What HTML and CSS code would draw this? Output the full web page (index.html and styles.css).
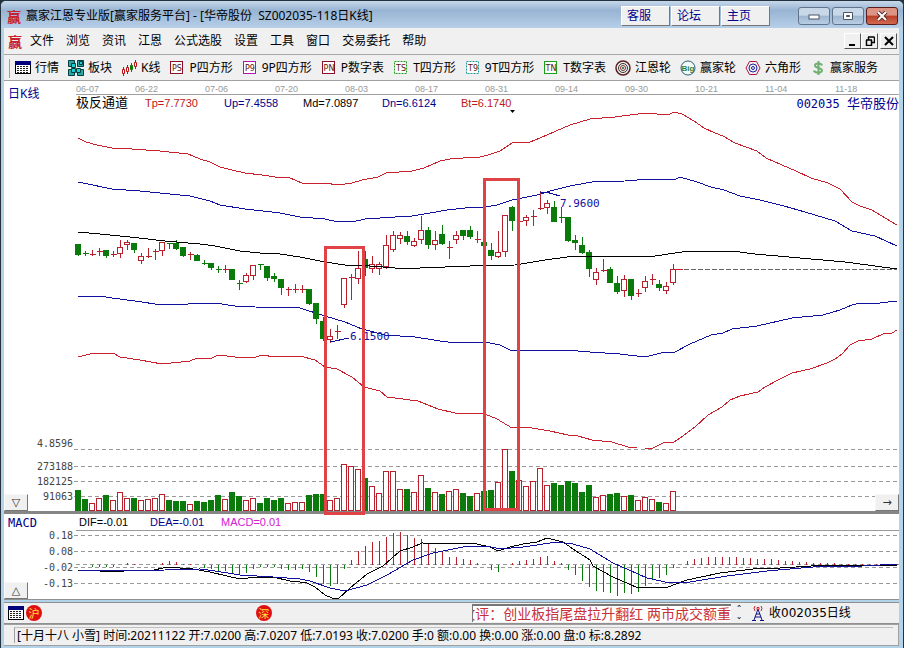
FILE: index.html
```html
<!DOCTYPE html>
<html lang="zh-CN">
<head>
  <meta charset="UTF-8">
  <meta name="viewport" content="width=device-width, initial-scale=1">
  <title>赢家江恩专业版</title>
  <link rel="stylesheet" href="styles.css">
</head>
<body>
  <div class="window">

    <!-- Title bar -->
    <header class="titlebar">
      <span class="logo">赢</span>
      <h1>赢家江恩专业版[赢家服务平台] - [华帝股份&nbsp; SZ002035-118日K线]</h1>
      <div class="site-links">
        <a href="#service">客服</a>
        <a href="#forum">论坛</a>
        <a href="#home">主页</a>
      </div>
      <div class="win-buttons">
        <button aria-label="最小化"><svg width="12" height="8"><rect x="1" y="3" width="10" height="4" fill="#fff" stroke="#4b5566"/></svg></button>
        <button aria-label="最大化"><svg width="12" height="10"><path d="M1.500 1.500h9v7h-9zM4.500 4.500h3v1h-3z" fill="#fff" fill-rule="evenodd" stroke="#4b5566"/></svg></button>
        <button class="close" aria-label="关闭"><svg width="12" height="10"><path d="M2 1l8 8M10 1l-8 8" stroke="#5b2a2a" stroke-width="4"/><path d="M2 1l8 8M10 1l-8 8" stroke="#fff" stroke-width="2"/></svg></button>
      </div>
    </header>

    <!-- Menu -->
    <nav class="menubar">
      <span class="logo">赢</span>
      <button>文件</button>
      <button>浏览</button>
      <button>资讯</button>
      <button>江恩</button>
      <button>公式选股</button>
      <button>设置</button>
      <button>工具</button>
      <button>窗口</button>
      <button>交易委托</button>
      <button>帮助</button>
      <div class="mdi-buttons">
        <button aria-label="最小化"><svg width="10" height="10"><path d="M1 9h6" stroke="#000" stroke-width="2"/></svg></button>
        <button aria-label="还原"><svg width="10" height="10"><path d="M3 1h6.500M3.500 1v3M9.500 1v5.500H7M1 4h6M1.500 4v5.500h5V4" fill="none" stroke="#000" stroke-width="1.500"/></svg></button>
        <button class="mdi-close" aria-label="关闭"><svg width="10" height="10"><path d="M1 1l8 8M9 1l-8 8" stroke="#000" stroke-width="2"/></svg></button>
      </div>
    </nav>

    <!-- Toolbar -->
    <div class="toolbar">
      <button>
        <svg width="16" height="16"><rect x=".5" y="1.500" width="15" height="12" fill="#fff" stroke="#000"/><rect y="1" width="16" height="4" fill="#00007b"/><path d="M2 6.500h12M2 8.500h12M2 10.500h12M2 12.500h12" stroke="#222" stroke-dasharray="2 1"/></svg>
        行情</button>
      <button>
        <svg width="16" height="16"><g fill="#2aa7a7" stroke="#063c3c"><path d="M.5.5h6v6h-6zM9.500.5h6v6h-6zM.5 9.500h6v6h-6zM9.500 9.500h6v6h-6z"/></g><path d="M3.500 3.500h4v4h-4zM11.500 1.500h3v3h-3zM3.500 8.500h4v4h-4zM8.500 8.500h4v4h-4z" fill="#1fd0d0" stroke="#063c3c"/></svg>
        板块</button>
      <button>
        <svg width="16" height="16"><g fill="#fff" stroke="#c01010"><path d="M2.500 7v9M6.500 5v9M14.500 0v9"/><path d="M1.500 9.500h2v4h-2zM5.500 7.500h2v4h-2zM13.500 2.500h2v4h-2z"/></g><path d="M10.500 3v9M9.500 5.500h2v4h-2z" fill="#0a7a0a" stroke="#0a7a0a"/></svg>
        K线</button>
      <button>
        <svg class="tag" width="16" height="16"><rect x="1.500" y="1.500" width="12" height="12" fill="#fff" stroke="#8a0f2a"/><text x="8" y="11">PS</text></svg>
        P四方形</button>
      <button>
        <svg class="tag" width="16" height="16"><rect x="1.500" y="1.500" width="12" height="12" fill="#fff" stroke="#b414b4"/><text x="8" y="11">P9</text></svg>
        9P四方形</button>
      <button>
        <svg class="tag" width="16" height="16"><rect x="1.500" y="1.500" width="12" height="12" fill="#fff" stroke="#8a0f2a"/><text x="8" y="11">PN</text></svg>
        P数字表</button>
      <button>
        <svg class="tag" width="16" height="16"><rect x="1.500" y="1.500" width="12" height="12" fill="#fff" stroke="#1aa01a" stroke-dasharray="2 1"/><text x="8" y="11">TS</text></svg>
        T四方形</button>
      <button>
        <svg class="tag" width="16" height="16"><rect x="1.500" y="1.500" width="12" height="12" fill="#fff" stroke="#1f9a9a" stroke-dasharray="2 1"/><text x="8" y="11">T9</text></svg>
        9T四方形</button>
      <button>
        <svg class="tag" width="16" height="16"><rect x="1.500" y="1.500" width="12" height="12" fill="#fff" stroke="#1aa01a"/><text x="8" y="11">TN</text></svg>
        T数字表</button>
      <button>
        <svg width="16" height="16" fill="none"><circle cx="8" cy="8" r="7" stroke="#5a1f1f" stroke-width="1.500"/><circle cx="8" cy="8" r="4.500" stroke="#333"/><circle cx="8" cy="8" r="2.500" stroke="#7b3030"/><circle cx="8" cy="8" r="1" fill="#186018"/></svg>
        江恩轮</button>
      <button>
        <svg class="big" width="16" height="16"><circle cx="8" cy="8" r="7" fill="#f4fbf8" stroke="#28607c"/><text x="8" y="11" text-anchor="middle">Big</text></svg>
        赢家轮</button>
      <button>
        <svg width="16" height="16" fill="none"><path d="M1 8l3.500-6.500h7L15 8l-3.500 6.500h-7z" stroke="#b01840"/><circle cx="8" cy="8" r="4" stroke="#2020a0"/><circle cx="8" cy="8" r="1.500" stroke="#2020a0"/></svg>
        六角形</button>
      <button>
        <svg width="16" height="16" fill="none"><path d="M12 5.500C11.500 3 5 2.500 5 5.500S12 7.500 12 10.500 4.500 13 4 10.500M8.500 1v14" stroke="#6fae6f" stroke-width="2"/></svg>
        赢家服务</button>
    </div>

    <!-- Daily candles with the channel bands -->
    <section class="panel price">
      <div class="price-head">
        <h2>日K线</h2>
        <div class="price-info">
          <ol class="dates">
            <li>06-07</li><li>06-22</li><li>07-06</li><li>07-20</li><li>08-03</li><li>08-17</li>
            <li>08-31</li><li>09-14</li><li>09-30</li><li>10-21</li><li>11-04</li><li>11-18</li>
          </ol>
          <div class="legend">
            <b>极反通道</b>
            <span class="red">Tp=7.7730</span>
            <span class="blue">Up=7.4558</span>
            <span>Md=7.0897</span>
            <span class="blue">Dn=6.6124</span>
            <span class="red">Bt=6.1740</span>
            <strong>002035 <i>华帝股份</i></strong>
          </div>
        </div>
      </div>
      <svg id="priceChart" class="chart" viewBox="4 110 895 401"></svg>
      <button class="corner left" aria-label="向下">▽</button>
      <button class="corner right" aria-label="向右">→</button>
    </section>

    <section class="panel macd">
      <div class="macd-head">
        <h2>MACD</h2>
        <span>DIF=-0.01</span>
        <span class="blue">DEA=-0.01</span>
        <span class="pink">MACD=0.01</span>
      </div>
      <svg id="macdChart" class="chart" viewBox="4 530 895 69"></svg>
      <button class="corner left" aria-label="向上">△</button>
    </section>

    <!-- News line -->
    <div class="newsbar">
      <svg width="16" height="14"><rect x=".5" y=".5" width="15" height="13" fill="#fff" stroke="#000"/><rect width="16" height="4" fill="#00007b"/><path d="M2 5.500h12M2 7.500h12M2 9.500h12M2 11.500h12" stroke="#222" stroke-dasharray="2 1"/></svg>
      <span class="market">沪</span>
      <span class="market second">深</span>
      <div class="news"><span>收评：创业板指尾盘拉升翻红 两市成交额重</span></div>
      <div class="spin"><button aria-label="上一条">⌃</button><button aria-label="下一条">⌄</button></div>
      <svg class="tower" width="12" height="16" fill="none"><path d="M6 4L2 15M6 4l4 11M4 9h4M3 12h6M0 15.500h4M8 15.500h4" stroke="#101080"/><path d="M3 1q-2 2 0 5M9 1q2 2 0 5M5 2.500h2v2H5z" stroke="#c02030"/></svg>
      <span class="feed">收002035日线</span>
    </div>

    <footer class="statusbar">
      <p>[十月十八 小雪] 时间:20211122 开:7.0200 高:7.0207 低:7.0193 收:7.0200 手:0 额:0.00 换:0.00 涨:0.00 盘:0 标:8.2892</p>
    </footer>
  </div>

  <script src="chart.js"></script>
</body>
</html>
```
FILE: styles.css
```css
* {
  box-sizing: border-box;
}

body {
  margin: 0;
  min-height: 100vh;
  background: #20303c;
  font-family: "Noto Sans", "Noto Sans CJK SC", sans-serif;
  font-size: 12px;
  line-height: 16px;
  color: #000;
}

button {
  margin: 0;
  padding: 0;
  border: 0;
  background: none;
  font: inherit;
  color: inherit;
}

h1, h2, p, ol {
  margin: 0;
  padding: 0;
  font-size: 12px;
  font-weight: normal;
}

svg {
  display: block;
  flex: none;
}

.window {
  display: flex;
  flex-direction: column;
  min-height: 100vh;
  padding: 0 4px 6px 3px;
  border: 1px solid #25313d;
  border-radius: 6px 6px 0 0;
  background: #b3d3ea;
}

.logo {
  width: 18px;
  font-family: "Noto Sans CJK SC", sans-serif;
  font-size: 14px;
  font-weight: bold;
  color: #c8202c;
}

/* title bar */
.titlebar {
  display: flex;
  align-items: center;
  height: 27px;
  margin: 0 -4px 0 -3px;
  padding: 3px 5px 0 6px;
  border-radius: 5px 5px 0 0;
  background: linear-gradient(#c6d8ea, #98b4d3 35%, #b7cfe8);
}

.titlebar h1 {
  flex: 1;
  padding-left: 1px;
  white-space: nowrap;
}

.site-links {
  display: flex;
  gap: 1px;
  margin-right: 28px;
}

.site-links a {
  width: 49px;
  height: 20px;
  padding: 1px 5px;
  border: 1px solid;
  border-color: #fff #777 #777 #fff;
  background: #f0f0f0;
  color: #00008b;
  text-decoration: none;
}

.win-buttons {
  display: flex;
  gap: 2px;
}

.win-buttons button {
  display: grid;
  place-items: center;
  width: 32px;
  height: 18px;
  border: 1px solid #61748c;
  border-radius: 3px;
  background: linear-gradient(#c9d8e8 45%, #9fb6d0 50%, #b9cee4);
}

.win-buttons .close {
  border-color: #5b1c1c;
  background: linear-gradient(#dc9485 45%, #bb3d28 50%, #cf6a50);
}

/* menu */
.menubar {
  display: flex;
  align-items: center;
  gap: 12px;
  height: 26px;
  padding: 0 2px 0 4px;
  background: #f0f0f0;
}

.menubar .logo {
  margin-right: -8px;
}

.mdi-buttons {
  display: flex;
  margin-left: auto;
}

.mdi-buttons button {
  display: grid;
  place-items: center;
  width: 17px;
  height: 16px;
  border: 1px solid;
  border-color: #fff #555 #555 #fff;
}

.mdi-buttons .mdi-close {
  margin-left: 2px;
}

/* toolbar */
.toolbar {
  display: flex;
  align-items: center;
  gap: 9px;
  height: 27px;
  padding-left: 11px;
  border-top: 1px solid #a8a8a8;
  border-bottom: 1px solid #a0a0a0;
  background: linear-gradient(#a0a0a0, #a0a0a0) 5px 4px / 1px 19px no-repeat, #f0f0f0;
}

.toolbar button {
  display: flex;
  align-items: center;
  gap: 4px;
  white-space: nowrap;
}

.tag text {
  font: 8px "DejaVu Sans", sans-serif;
  fill: #5c1010;
  text-anchor: middle;
}

.big text {
  font: bold 8px "Liberation Sans", sans-serif;
  fill: #1f8050;
}

/* chart panels */
.panel {
  position: relative;
  background: #fff;
}

.panel h2 {
  padding-left: 4px;
  color: #00008b;
}

.price {
  border-bottom: 3px solid #868686;
}

.price-head {
  display: grid;
  grid-template-columns: 72px minmax(0, 1fr);
  height: 29px;
}

.price-head h2 {
  padding-top: 5px;
}

.dates {
  display: flex;
  height: 14px;
  border-bottom: 1px solid #a0a0a0;
  font: 9px/16px "Liberation Sans", sans-serif;
  color: #999;
  list-style: none;
}

.dates li {
  flex: none;
  width: 70px;
}

.dates li:first-child {
  width: 59px;
}

.dates li:last-child {
  width: auto;
}

.legend {
  display: flex;
  font: 11px/16px "Liberation Sans", "Noto Sans CJK SC", sans-serif;
}

.legend span {
  width: 79px;
}

.legend b {
  width: 69px;
  font-size: 13px;
  font-weight: normal;
}

.legend strong {
  margin-left: auto;
  font: 12px/16px "DejaVu Sans Mono", monospace;
  color: #00008b;
}

.legend i {
  font: 13px/16px "Noto Sans CJK SC", sans-serif;
}

.red { color: #c01818; }
.blue { color: #00008b; }
.pink { color: #d020d0; }

.chart {
  width: 100%;
  height: auto;
  overflow: visible;
}

.price .chart {
  position: relative;
  z-index: 1;
}

.corner {
  position: absolute;
  z-index: 2;
  bottom: 0;
  width: 24px;
  height: 17px;
  border: 1px solid;
  border-color: #f8f8f8 #777 #777 #f8f8f8;
  background: #f0f0f0;
  font: 11px/14px "DejaVu Sans", sans-serif;
  color: #333;
}

.corner.left { left: 0; }
.corner.right { right: 0; }

.macd {
  border-bottom: 1px solid #909090;
}

.macd-head {
  display: flex;
  height: 16px;
  font: 11px/16px "Liberation Sans", sans-serif;
}

.macd-head h2 {
  width: 75px;
  font: 12px/18px "DejaVu Sans Mono", monospace;
}

.macd-head span {
  width: 71px;
}

/* chart drawing */
.grid { stroke: #999; stroke-dasharray: 4 3; }
.frame { stroke: #999; }
.axis { font: 10px "DejaVu Sans Mono", monospace; fill: #444; text-anchor: end; }
.line { fill: none; shape-rendering: crispEdges; }
.line.r { stroke: #c8202c; }
.line.b { stroke: #10109c; }
.line.k { stroke: #000; }
.line.last { stroke: #666; stroke-dasharray: 5 2; }
.up { fill: #fff; stroke: #b8202c; }
.down { fill: #0a7a0a; stroke: #0a7a0a; }
.crisp { shape-rendering: crispEdges; }
.mark { fill: none; stroke: #e04345; stroke-width: 3; }
.value { font: 11px "DejaVu Sans Mono", monospace; fill: #1010a0; }

/* bottom bars */
.newsbar {
  display: flex;
  align-items: center;
  height: 22px;
  margin-top: 2px;
  padding-left: 4px;
  border-top: 1px solid #909090;
  border-bottom: 1px solid #909090;
  background: #f0f0f0;
}

.market {
  width: 16px;
  height: 16px;
  margin-left: 2px;
  border-radius: 8px;
  background: #e01010;
  font: 11px/16px "Noto Sans CJK SC", sans-serif;
  text-align: center;
  color: #ffe040;
}

.market.second {
  margin-left: 24%;
}

.news {
  display: flex;
  flex: 1;
  justify-content: flex-end;
  max-width: 259px;
  height: 18px;
  margin-left: auto;
  overflow: hidden;
  border-top: 2px solid #777;
  border-left: 1px solid #777;
  background: #fff;
  font-size: 14px;
  line-height: 16px;
  white-space: nowrap;
  color: #c8303a;
}

.spin {
  display: flex;
  flex-direction: column;
  width: 16px;
  font: 8px/8px "DejaVu Sans", sans-serif;
}

.spin button {
  height: 8px;
}

.tower {
  margin: 0 5px;
}

.feed {
  width: 130px;
  font-family: "DejaVu Sans", "Noto Sans CJK SC", sans-serif;
}

.statusbar {
  flex: 1;
  padding: 2px 5px 2px 4px;
  border: 1px solid #a0a0a0;
  border-left: 0;
  background: #f0f0f0;
}

.statusbar p {
  height: 16px;
  padding-left: 2px;
  border-left: 1px solid #a0a0a0;
  border-top: 1px solid #c0c0c0;
  margin-left: 6px;
  line-height: 15px;
  white-space: nowrap;
  overflow: hidden;
}
```
FILE: chart.js
```js
const NS = 'http://www.w3.org/2000/svg';
const STEP = 7;
const FIRST = 78;

function add(svg, tag, attrs, text) {
  const el = document.createElementNS(NS, tag);
  for (const key in attrs) el.setAttribute(key, attrs[key]);
  if (text) el.textContent = text;
  svg.appendChild(el);
  return el;
}

function line(svg, cls, points) {
  add(svg, 'polyline', { class: 'line ' + cls, points: points });
}

function gridLine(svg, y, label, labelY) {
  add(svg, 'path', { class: 'grid crisp', d: `M74 ${y + 0.5}H899` });
  add(svg, 'text', { class: 'axis', x: 73, y: labelY }, label);
}

// [direction, high, body top, body bottom, low, volume top]
const candles = [
  ['g',244,244,254,255,490], ['g',251,253,253,255,499], ['r',250,254,254,255,503], ['r',248,251,251,255,498],
  ['g',250,250,255,257,495], ['r',251,254,254,256,500], ['r',240,247,253,257,492], ['r',240,242,244,249,498],
  ['g',243,243,249,252,498], ['r',253,256,260,263,500], ['r',248,256,256,257,499], ['r',249,251,251,259,498],
  ['r',242,242,250,255,494], ['g',243,243,243,248,500], ['g',240,243,248,249,501], ['g',247,247,255,256,501],
  ['r',252,254,254,259,504], ['g',254,255,260,260,501], ['g',260,263,263,264,502], ['g',263,263,267,269,500],
  ['g',266,269,269,272,495], ['r',265,269,269,272,499], ['g',269,269,279,279,492], ['g',280,283,283,289,496],
  ['r',273,275,281,282,500], ['r',265,265,275,279,498], ['g',264,264,264,269,503], ['g',266,266,277,280,498],
  ['g',273,276,278,281,500], ['g',279,279,287,294,498], ['r',287,289,289,295,503], ['r',284,289,289,292,502],
  ['r',285,289,289,292,502], ['g',289,289,303,304,495], ['g',303,303,318,323,494], ['g',317,321,338,340,494],
  ['r',329,336,339,342,500], ['r',325,331,331,338,498], ['r',278,278,304,307,464], ['r',274,277,277,299,466],
  ['r',251,268,278,283,469], ['g',251,259,267,275,478], ['r',256,264,268,272,486], ['r',262,264,268,274,493],
  ['r',235,245,266,268,471], ['r',231,235,249,251,471], ['r',232,235,238,243,489], ['g',231,236,241,244,489],
  ['r',238,241,245,246,492], ['r',216,230,239,243,475], ['g',227,230,244,248,488], ['r',231,240,244,249,492],
  ['g',225,234,243,244,494], ['r',241,247,247,258,491], ['r',231,235,239,243,489], ['g',230,230,235,239,493],
  ['g',226,230,236,238,496], ['r',231,239,239,242,493], ['g',242,242,245,246,491], ['g',243,250,255,259,490],
  ['r',231,252,256,257,482], ['r',215,215,251,256,449], ['g',206,207,220,230,471], ['r',219,221,221,224,480],
  ['r',215,217,220,225,486], ['r',210,216,216,225,481], ['r',191,208,208,209,468], ['r',200,203,207,213,485],
  ['g',201,207,221,221,483], ['g',207,217,217,222,485], ['g',217,217,240,241,481], ['g',235,240,242,249,483],
  ['g',237,245,252,253,492], ['g',250,252,268,276,485], ['r',268,272,279,284,497], ['r',259,270,270,271,495],
  ['g',267,269,282,282,494], ['g',276,283,291,293,493], ['r',275,279,290,296,496], ['g',279,279,295,299,495],
  ['r',289,293,293,296,500], ['r',276,281,287,291,497], ['r',274,279,279,284,499], ['g',280,284,287,290,502],
  ['r',282,286,290,293,503], ['r',264,269,282,284,491]
];

// bar heights above (+) or below (-) the zero line
const histogram = [
  0,0,-2,-2,-2,-2,0,2,1,0,0,0,2,4,3,1,1,0,-3,-4,-6,-6,-8,-10,-8,-4,-2,-2,-2,-4,-5,-5,
  -4,-7,-12,-19,-21,-19,-4,5,14,19,23,24,28,32,33,30,27,26,21,17,14,8,8,6,5,2,0,-5,-7,0,
  2,4,5,6,8,9,4,2,-5,-10,-16,-22,-26,-27,-28,-31,-28,-29,-27,-21,-15,-13,-10,-3,0,4,6,7,
  8,8,8,8,8,7,7,6,6,6,5,4,4,3,3,2,2,2,2,1,1,1,1,1,1,1,1,1
];

function drawPrice() {
  const svg = document.getElementById('priceChart');
  gridLine(svg, 449, '4.8596', 447);
  gridLine(svg, 466, '273188', 470);
  gridLine(svg, 481, '182125', 485);
  gridLine(svg, 496, '91063', 500);

  line(svg, 'r', '78,138 86,142 97,145 112,148 132,149 160,151 188,154 200,159 210,162 220,167 232,170 245,173 262,175 275,177 290,178 302,183 325,183 338,185 352,183 362,180 378,177 386,173 412,171 424,168 440,161 455,158 463,158 480,157 488,155 500,151 512,143 530,142 540,138 556,131 570,125 590,119 615,117 630,115 646,113 668,115 674,112 682,114 694,121 704,128 715,133 723,136 735,143 757,151 766,158 782,165 796,171 811,178 828,183 840,189 852,202 860,206 872,210 885,218 897,225');
  line(svg, 'b', '78,182 112,189 140,191 190,196 210,201 220,205 245,209 263,211 280,213 300,217 325,219 338,222 345,221 352,222 365,219 395,217 412,216 430,213 447,210 465,208 485,207 497,205 512,200 537,195 550,191 570,186 592,182 625,181 650,179 676,179 680,177 697,182 711,187 724,190 740,196 760,200 784,206 805,212 835,221 852,231 875,236 897,246');
  line(svg, 'b', '78,296 100,296 112,298 135,301 162,305 188,304 215,303 235,306 255,307 300,308 325,316 345,322 362,329 385,335 415,337 440,341 455,343 465,342 490,343 500,345 510,350 565,350 590,352 620,354 645,357 665,352 675,352 690,344 711,335 723,333 732,329 757,326 792,318 823,315 840,310 852,305 860,303 880,303 897,301');
  line(svg, 'r', '78,357 90,354 113,353 120,357 140,360 162,364 190,361 197,358 212,358 218,355 235,357 245,357 253,358 262,355 275,357 300,356 315,360 325,367 337,369 352,377 364,387 380,391 387,397 418,401 438,409 455,413 485,414 497,419 512,428 526,427 550,431 568,435 578,436 592,440 612,442 628,447 637,447');
  line(svg, 'r', '645,449 653,448 665,442 674,442 680,438 695,427 708,415 722,407 730,400 740,396 758,392 765,387 780,379 792,373 810,369 827,363 835,359 842,354 850,345 858,341 872,339 883,334 892,333 897,330');

  candles.forEach(([dir, high, top, bottom, low, vol], i) => {
    const x = FIRST + i * STEP + 0.5;
    const cls = (dir === 'r' ? 'up' : 'down') + ' crisp';
    add(svg, 'path', { class: cls, d: `M${x} ${high}V${low + 1}` });
    if (top === bottom) {
      add(svg, 'path', { class: cls, d: `M${x - 3} ${top + 0.5}h6` });
    } else {
      add(svg, 'rect', { class: cls, x: x - 3, y: top + 0.5, width: 5, height: bottom - top });
    }
    add(svg, 'rect', { class: cls, x: x - 3, y: vol + 0.5, width: 5, height: 510 - vol });
  });

  line(svg, 'k', '78,232 100,234 130,237 165,241 200,244 215,246 240,251 260,253 280,254 300,257 325,262 345,265 370,266 395,268 420,268 470,266 515,265 545,260 575,256 655,256 682,252 700,251 732,251 755,254 800,258 845,262 875,266 897,269');

  // last price carried to the right edge
  add(svg, 'path', { class: 'line r', d: 'M675 269.5h8' });
  add(svg, 'path', { class: 'line last', d: 'M684 269.5H897' });

  line(svg, 'b', '330,342 349,338');
  add(svg, 'text', { class: 'value', x: 350, y: 340 }, '6.1500');
  line(svg, 'b', '540,192 546,192 560,196');
  add(svg, 'text', { class: 'value', x: 560, y: 207 }, '7.9600');
  add(svg, 'path', { d: 'M510 110h5l-2.500 3z' });

  add(svg, 'rect', { class: 'mark', x: 325.5, y: 247.5, width: 38, height: 266 });
  add(svg, 'rect', { class: 'mark', x: 484.5, y: 179.5, width: 34, height: 330 });
}

function drawMacd() {
  const svg = document.getElementById('macdChart');
  add(svg, 'path', { class: 'frame crisp', d: 'M76 530.5H899' });
  gridLine(svg, 535, '0.18', 539);
  gridLine(svg, 551, '0.08', 555);
  gridLine(svg, 567, '-0.02', 571);
  gridLine(svg, 583, '-0.13', 587);
  add(svg, 'path', { class: 'grid crisp', d: 'M76 564.5H899' });

  histogram.forEach((h, i) => {
    const x = FIRST + i * STEP + 0.5;
    if (h) add(svg, 'path', { class: (h > 0 ? 'up' : 'down') + ' crisp', d: `M${x} 564.5v${-h}` });
  });

  line(svg, 'k', '78,570 100,571 115,572 133,570 150,571 167,567 193,569 210,572 227,576 240,579 257,577 273,577 290,581 300,582 307,583 315,587 325,595 332,598 338,599 350,588 367,574 383,566 400,551 413,547 422,543 477,544 490,547 498,551 510,547 523,544 537,542 547,538 563,542 573,549 590,560 593,566 613,577 638,588 668,587 687,580 720,573 753,569 780,568 827,565 897,565');
  line(svg, 'b', '78,570 115,571 165,570 200,569 215,571 240,575 273,577 300,579 310,581 330,588 345,591 367,585 387,575 413,560 433,553 463,547 487,546 500,549 523,547 557,542 573,544 590,549 613,563 647,578 670,583 690,582 727,576 767,571 813,567 863,566 897,564');
}

drawPrice();
drawMacd();
```
